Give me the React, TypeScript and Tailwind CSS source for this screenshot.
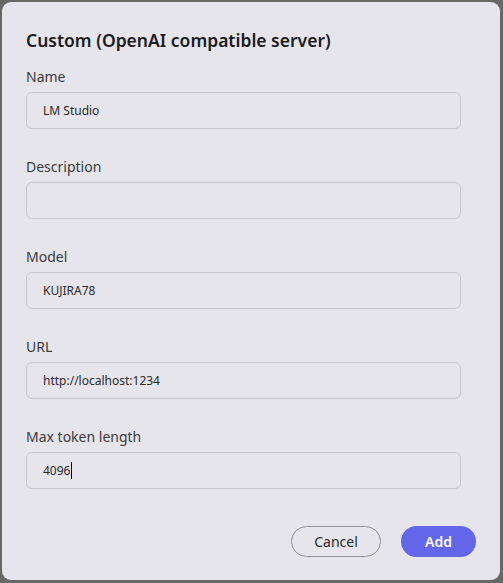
import React from "react";

const fields = [
  { label: "Name", value: "LM Studio" },
  { label: "Description", value: "" },
  { label: "Model", value: "KUJIRA78" },
  { label: "URL", value: "http://localhost:1234" },
  { label: "Max token length", value: "4096", caret: true },
];

export default function App() {
  return (
    <div className="h-[583px] w-[503px] bg-[#676767] pl-[2px] pt-[2px]" style={{ fontFamily: '"Noto Sans", "Open Sans", sans-serif' }}>
      <div className="h-[578px] w-[498px] rounded-[9px] bg-[#e6e5eb] pl-6 pt-[26px]">
        <h1 className="text-[17.5px] leading-[24px] font-semibold text-[#1c1c1c]">Custom (OpenAI compatible server)</h1>
        <div className="mt-[15px] flex flex-col gap-[28px]">
          {fields.map((f) => (
            <div key={f.label} className="flex flex-col">
              <label className="text-[14px] leading-[20px] text-[#3a3a3a]">{f.label}</label>
              <div className="mt-[5px] flex h-[37px] w-[435px] items-center rounded-[6px] border border-[#c9c8cd] pl-4 text-[12px] text-[#2a2a2a]">
                <span>{f.value}</span>
                {f.caret && <span className="ml-[1px] inline-block h-[17px] w-px bg-black" />}
              </div>
            </div>
          ))}
        </div>
        <div className="mt-[37px] flex justify-end gap-5 pr-6">
          <button className="h-[31px] w-[90px] rounded-full border border-[#8f8f93] text-[14px] text-[#2a2a2a]">Cancel</button>
          <button className="h-[31px] w-[75px] rounded-full bg-[#6466e9] text-[14px] font-semibold text-white">Add</button>
        </div>
      </div>
    </div>
  );
}
